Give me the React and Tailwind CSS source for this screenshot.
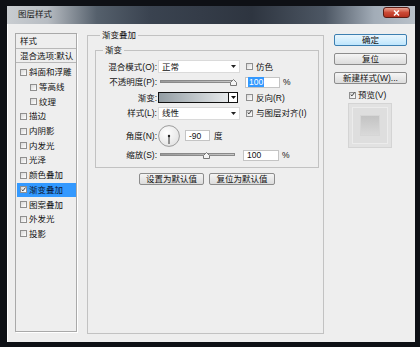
import React from 'react';

const FONT = "font-['Liberation_Sans','Noto_Sans_CJK_SC',sans-serif]";

const LAYERS = [
  { label: '斜面和浮雕' },
  { label: '等高线', indent: true },
  { label: '纹理', indent: true },
  { label: '描边' },
  { label: '内阴影' },
  { label: '内发光' },
  { label: '光泽' },
  { label: '颜色叠加' },
  { label: '渐变叠加', checked: true, active: true },
  { label: '图案叠加' },
  { label: '外发光' },
  { label: '投影' },
];

function Check({ checked }) {
  return (
    <span className="flex h-[7px] w-[7px] shrink-0 items-center justify-center border border-[#8f8f8f] bg-linear-to-br from-[#d8d8d8] to-white">
      {checked && (
        <svg width="7" height="7" viewBox="0 0 7 7" className="-mt-[1px]">
          <path d="M1 3.6 L2.8 5.4 L6.2 0.8" fill="none" stroke="#111" strokeWidth="1.1" />
        </svg>
      )}
    </span>
  );
}

function CheckLabel({ checked, children }) {
  return (
    <div className="ml-[6px] flex items-center">
      <Check checked={checked} />
      <span className="ml-[3px] whitespace-nowrap">{children}</span>
    </div>
  );
}

function Select({ value }) {
  return (
    <div className="ml-[1px] flex h-[13px] w-[82px] items-center justify-between border border-[#dadada] bg-white pl-[3px] pr-[3px]">
      <span>{value}</span>
      <svg width="5" height="3" viewBox="0 0 5 3">
        <path d="M0 0 H5 L2.5 3 Z" fill="#222" />
      </svg>
    </div>
  );
}

function Slider({ thumb }) {
  return (
    <div className="relative ml-[3px] h-[11px] w-[75px]">
      <div className="mt-[3px] h-[3px] w-full border border-[#8a8a8a] bg-linear-to-r from-[#9a9a9a] to-[#c9c9c9]" />
      <svg width="7" height="7" viewBox="0 0 7 7" className="absolute top-[2px]" style={{ left: thumb }}>
        <path d="M0.5 6.5 V3.5 L3.5 0.5 L6.5 3.5 V6.5 Z" fill="#f4f4f4" stroke="#777" />
      </svg>
    </div>
  );
}

function Field({ children, className }) {
  return (
    <div className={`flex h-[11px] items-center border border-[#c4c4c4] bg-white pl-[2px] ${className}`}>
      {children}
    </div>
  );
}

function Row({ label, className = 'h-[15.5px]', children }) {
  return (
    <div className={`flex items-center ${className}`}>
      <span className="w-[61px] whitespace-nowrap text-right">{label}</span>
      {children}
    </div>
  );
}

function Button({ children, primary, className }) {
  return (
    <div
      className={`flex items-center justify-center rounded-[2px] border bg-linear-to-b ${
        primary
          ? 'border-[#3c7fb1] from-[#eaf6fd] to-[#bee6fd]'
          : 'border-[#8c8c8c] from-[#f5f5f5] to-[#dcdcdc]'
      } ${className}`}
    >
      {children}
    </div>
  );
}

export default function App() {
  return (
    <div className={`h-[347px] w-[420px] overflow-hidden bg-[#0e1015] pl-[7px] pt-[6px] text-[8.5px] leading-[10px] text-[#111] ${FONT}`}>
      <div className="flex h-[336px] w-[408px] flex-col bg-[#eeeeee]">
        {/* title bar */}
        <div className="flex h-[18px] shrink-0 items-start justify-between bg-[linear-gradient(90deg,#c9cdd1_0%,#b7bcc2_10%,#55606c_22%,#3a4350_35%,#2e3540_60%,#4d5764_78%,#a2acb7_90%,#b9c1c9_100%)] pl-[11px] pr-[5px] pt-[3px]">
          <span className="text-[#1a1a1a]">图层样式</span>
          <div className="-mt-[2px] flex h-[11px] w-[27px] items-center justify-center rounded-[3px] border border-[#5a1c14] bg-linear-to-b from-[#e9a292] via-[#cc4a36] to-[#b5311f]">
            <svg width="7" height="6" viewBox="0 0 7 6">
              <path d="M1 0.5 L6 5.5 M6 0.5 L1 5.5" stroke="#fff" strokeWidth="1.5" />
            </svg>
          </div>
        </div>

        {/* body */}
        <div className="flex flex-1 items-start border-l border-white pl-[7px]">
          {/* style list */}
          <div className="mt-[9px] flex h-[299px] w-[62px] flex-col border border-[#a9a9a9] shadow-[1px_1px_0_#fff]">
            <div className="flex h-[15px] items-center border-b border-[#b8b8b8] pl-[4px]">样式</div>
            <div className="flex h-[14px] items-center border-b border-[#b8b8b8] pl-[4px]">混合选项:默认</div>
            <div className="pt-[2px]">
              {LAYERS.map((item) => (
                <div
                  key={item.label}
                  className={`ml-[1px] flex h-[14.7px] items-center ${item.indent ? 'pl-[13px]' : 'pl-[3px]'} ${
                    item.active ? 'bg-[#3399ff] text-[#0b1836]' : ''
                  }`}
                >
                  <Check checked={item.checked} />
                  <span className="ml-[2px]">{item.label}</span>
                </div>
              ))}
            </div>
          </div>

          {/* gradient overlay */}
          <fieldset className="ml-[10px] mt-[6px] h-[304px] w-[237px] border border-[#c2c2c2] pl-[7px] pr-[4px]">
            <legend className="ml-[5px] px-[2px] leading-[10px]">渐变叠加</legend>
            <fieldset className="mt-[5px] border border-[#c2c2c2] pb-[6px]">
              <legend className="ml-[7px] px-[2px] leading-[10px]">渐变</legend>
              <div className="pt-[4px]">
                <Row label="混合模式(O):">
                  <Select value="正常" />
                  <CheckLabel>仿色</CheckLabel>
                </Row>
                <Row label="不透明度(P):">
                  <Slider thumb={70} />
                  <Field className="ml-[10px] w-[35px]">
                    <span className="bg-[#3399ff] px-[1px] text-white">100</span>
                  </Field>
                  <span className="ml-[3px]">%</span>
                </Row>
                <Row label="渐变:">
                  <div className="ml-[1px] flex h-[11px] w-[80px] border border-[#111]">
                    <div className="flex-1 bg-[linear-gradient(90deg,#939da3_0%,#b9c0c4_45%,#e6e9eb_100%)]" />
                    <div className="flex w-[9px] items-center justify-center border-l border-[#111] bg-white">
                      <svg width="5" height="3" viewBox="0 0 5 3">
                        <path d="M0 0 H5 L2.5 3 Z" fill="#111" />
                      </svg>
                    </div>
                  </div>
                  <div className="ml-[2px]">
                    <CheckLabel>反向(R)</CheckLabel>
                  </div>
                </Row>
                <Row label="样式(L):">
                  <Select value="线性" />
                  <CheckLabel checked>与图层对齐(I)</CheckLabel>
                </Row>
                <Row label="角度(N):" className="mt-[3px] h-[23px]">
                  <svg width="22" height="22" viewBox="0 0 22 22" className="ml-[1px]">
                    <defs>
                      <radialGradient id="dial" cx="40%" cy="35%" r="70%">
                        <stop offset="0%" stopColor="#ffffff" />
                        <stop offset="100%" stopColor="#e2e2e2" />
                      </radialGradient>
                    </defs>
                    <circle cx="11" cy="11" r="10.4" fill="url(#dial)" stroke="#9c9c9c" />
                    <line x1="11" y1="11" x2="11" y2="19" stroke="#222" strokeWidth="0.9" />
                    <circle cx="11" cy="11" r="1.2" fill="#222" />
                  </svg>
                  <Field className="ml-[5px] w-[25px]">
                    <span className="pl-[1px]">-90</span>
                  </Field>
                  <span className="ml-[4px]">度</span>
                </Row>
                <Row label="缩放(S):" className="mt-[2px] h-[12px]">
                  <Slider thumb={43} />
                  <Field className="ml-[8px] w-[36px]">
                    <span className="pl-[1px]">100</span>
                  </Field>
                  <span className="ml-[3px]">%</span>
                </Row>
              </div>
            </fieldset>
            <div className="mt-[5px] flex justify-center gap-[5px]">
              <Button className="h-[12px] w-[65px]">设置为默认值</Button>
              <Button className="h-[12px] w-[66px]">复位为默认值</Button>
            </div>
          </fieldset>

          {/* actions */}
          <div className="ml-[10px] mt-[10px] flex w-[73px] flex-col">
            <Button primary className="h-[12px]">确定</Button>
            <Button className="mt-[7px] h-[12px]">复位</Button>
            <Button className="mt-[7px] h-[12px]">新建样式(W)...</Button>
            <div className="mt-[6px] flex h-[10px] items-center pl-[15px]">
              <Check checked />
              <span className="ml-[2px]">预览(V)</span>
            </div>
            <div className="ml-[14px] mt-[3px] flex h-[45px] w-[44px] items-center justify-center border border-[#d4d4d4] bg-[#e2e2e2]">
              <div className="flex h-[37px] w-[36px] items-center justify-center border border-[#ececec] bg-[#dedede]">
                <div className="h-[21px] w-[20px] border border-[#d6d6d6] bg-linear-to-b from-[#c3c3c3] to-[#d9d9d9]" />
              </div>
            </div>
          </div>
        </div>
      </div>
    </div>
  );
}
